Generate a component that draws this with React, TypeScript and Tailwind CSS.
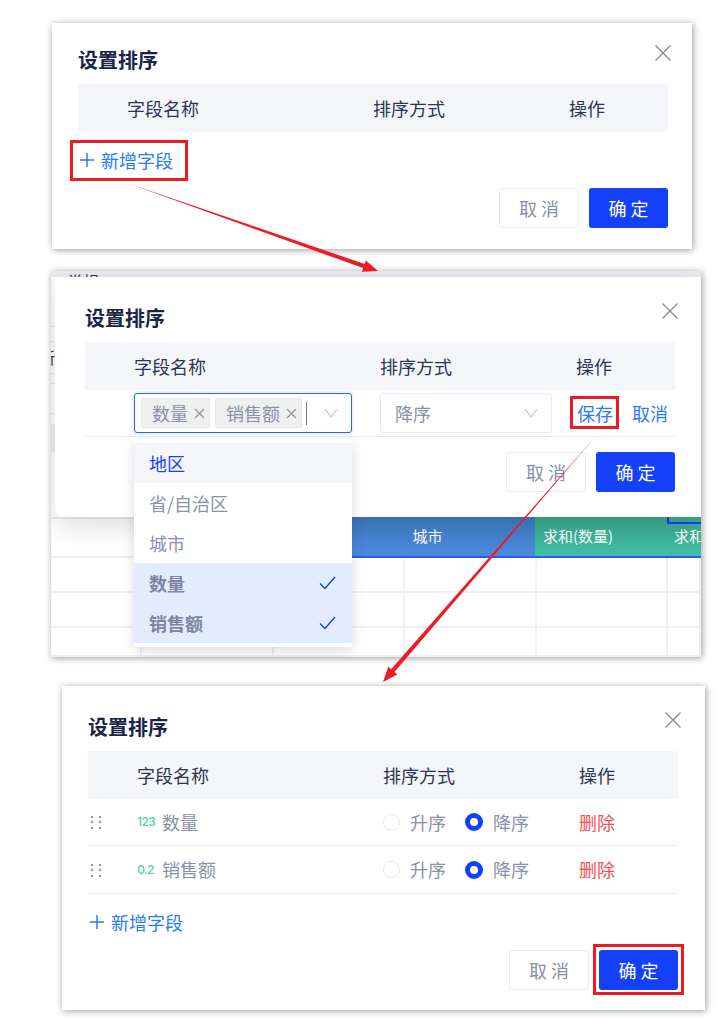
import type { ReactNode } from "react";

const headCols = "grid grid-cols-[49px_246px_196px_1fr]";
const bodyCells = Array.from({ length: 18 });

function CloseIcon() {
  return (
    <svg width="16" height="16" viewBox="0 0 16 16" fill="none" stroke="#8c8c8c" strokeWidth="1.4">
      <path d="M0.5 0.5L15.5 15.5M15.5 0.5L0.5 15.5" />
    </svg>
  );
}

function Chevron() {
  return (
    <svg width="14" height="10" viewBox="0 0 14 10" fill="none" stroke="#c4c7d0" strokeWidth="1.2">
      <path d="M1 1L7 9L13 1" />
    </svg>
  );
}

function Check() {
  return (
    <svg width="17" height="14" viewBox="0 0 17 14" fill="none" stroke="#1440fa" strokeWidth="1.4">
      <path d="M1 7.5L6 12.5L16 1" />
    </svg>
  );
}

function TagClose() {
  return (
    <svg width="11" height="11" viewBox="0 0 11 11" fill="none" stroke="#8a8f9c" strokeWidth="1.1">
      <path d="M1 1L10 10M10 1L1 10" />
    </svg>
  );
}

function DragDots() {
  return (
    <svg width="12" height="14" viewBox="0 0 12 14" fill="#8a91a8">
      <rect x="1" y="1" width="2" height="2" />
      <rect x="9" y="1" width="2" height="2" />
      <rect x="1" y="6" width="2" height="2" />
      <rect x="9" y="6" width="2" height="2" />
      <rect x="1" y="12" width="2" height="2" />
      <rect x="9" y="12" width="2" height="2" />
    </svg>
  );
}

function Title({ className }: { className: string }) {
  return <h2 className={`text-[20px] leading-[28px] font-bold text-[#1a2447] ${className}`}>设置排序</h2>;
}

function TableHead() {
  return (
    <div className={`${headCols} h-12 items-center bg-[#f4f6fa] text-[18px] text-[#2c3553]`}>
      <span />
      <span>字段名称</span>
      <span>排序方式</span>
      <span>操作</span>
    </div>
  );
}

function Footer() {
  return (
    <div className="flex justify-end gap-[10px]">
      <button className="h-10 w-20 rounded-[3px] border border-[#e8eaf0] bg-white text-[18px] text-[#8a91a8]">
        取 消
      </button>
      <OkButton />
    </div>
  );
}

function OkButton() {
  return (
    <button className="h-10 w-[79px] rounded-[3px] bg-[#1440fa] text-[18px] text-white">确 定</button>
  );
}

function AddField({ marked }: { marked?: boolean }) {
  return (
    <div className="relative flex items-center gap-[7px] pl-[2px] text-[18px] text-[#2a7cf6]">
      {marked && (
        <span className="absolute left-[-8px] top-[-7px] h-[41px] w-[118px] border-[3px] border-[#ed1c24]" />
      )}
      <svg width="14" height="14" viewBox="0 0 14 14" stroke="#2a7cf6" strokeWidth="1.5">
        <path d="M7 0V14M0 7H14" />
      </svg>
      <span>新增字段</span>
    </div>
  );
}

function Radio({ on, label }: { on?: boolean; label: string }) {
  return (
    <span className="flex items-center gap-[10px]">
      {on ? (
        <span className="h-[18px] w-[18px] rounded-full border-[5px] border-[#1440fa] bg-white" />
      ) : (
        <span className="h-[17px] w-[17px] rounded-full border border-[#e8eaf0] bg-white" />
      )}
      {label}
    </span>
  );
}

function SortRow({ icon, name, height }: { icon: string; name: string; height: string }) {
  return (
    <div className={`${headCols} ${height} items-center border-b border-[#e8eaf0] text-[18px] text-[#8a91a8]`}>
      <span className="pl-[2px]">
        <DragDots />
      </span>
      <span className="flex items-center">
        <span className="mr-[8px] w-[17px] whitespace-nowrap text-center font-['Inter',sans-serif] text-[12px] font-medium tracking-tighter text-[#55cdaa]">
          {icon}
        </span>
        {name}
      </span>
      <span className="flex items-center gap-[19px]">
        <Radio label="升序" />
        <Radio on label="降序" />
      </span>
      <span className="text-[#f0515a]">删除</span>
    </div>
  );
}

function Tag({ children }: { children: ReactNode }) {
  return (
    <span className="flex h-[30px] items-center gap-[6px] rounded-[2px] border border-[#e6e6e6] bg-[#f0f0f0] pl-[10px] pr-[4px] text-[18px] text-[#8a91a8]">
      {children}
      <TagClose />
    </span>
  );
}

function Option({ label, tone }: { label: string; tone?: "hover" | "picked" }) {
  if (tone === "picked") {
    return (
      <div className="flex h-10 items-center justify-between bg-[#e3ecfc] pl-[15px] pr-[16px] font-bold text-[#7e859f]">
        {label}
        <Check />
      </div>
    );
  }
  return (
    <div
      className={`flex h-10 items-center pl-[15px] ${tone === "hover" ? "bg-[#f4f6fa] text-[#1440fa]" : "text-[#8a91a8]"}`}
    >
      {label}
    </div>
  );
}

function FieldSelect() {
  return (
    <div className="relative w-[218px]">
      <div className="flex h-10 items-center gap-[5px] rounded-[3px] border border-[#2f62f5] pl-[6px] shadow-[0_0_0_2px_rgba(47,98,245,0.08)]">
        <Tag>数量</Tag>
        <Tag>销售额</Tag>
        <span className="ml-[-1px] h-[23px] w-px bg-[#6f7690]" />
        <span className="ml-[12px]">
          <Chevron />
        </span>
      </div>
      {/* dropdown hangs over the dialog edge and the sheet behind it */}
      <div className="absolute left-0 top-[46px] z-10 w-[218px] rounded-[3px] bg-white py-[4px] text-[18px] shadow-[0_4px_14px_rgba(0,0,0,0.14)]">
        <Option label="地区" tone="hover" />
        <Option label="省/自治区" />
        <Option label="城市" />
        <Option label="数量" tone="picked" />
        <Option label="销售额" tone="picked" />
      </div>
    </div>
  );
}

function EditRow() {
  return (
    <div className={`${headCols} h-[47px] border-b border-[#e8eaf0] pt-[3px] text-[18px]`}>
      <span />
      <FieldSelect />
      <div className="flex h-10 w-[172px] items-center justify-between rounded-[3px] border border-[#e8eaf0] pl-[14px] pr-[13px] text-[#8a91a8]">
        降序
        <Chevron />
      </div>
      <div className="relative flex h-10 items-center gap-[19px] pl-[1px] text-[#2a7cf6]">
        <span className="absolute left-[-6px] top-[3px] h-[33px] w-[49px] border-[3px] border-[#ed1c24]" />
        <span>保存</span>
        <span>取消</span>
      </div>
    </div>
  );
}

function Sheet() {
  return (
    <>
      <div className="h-[6px] overflow-hidden bg-[#eceef3] pl-[16px] text-[16px] leading-[20px] text-[#2c3553]">常规</div>
      <div className="flex h-[240px] w-[4px] flex-col overflow-hidden">
        <div className="h-[50px] shrink-0 border-b border-[#e8eaf0]" />
        <div className="h-[15px] shrink-0 border-b border-[#e8eaf0]" />
        <div className="flex h-[32px] shrink-0 justify-end border-b border-[#e8eaf0] text-[16px] leading-[30px] text-[#2c3553]">
          <span className="shrink-0">新</span>
        </div>
        <div className="h-[10px] shrink-0 border-b border-[#e8eaf0]" />
        <div className="h-[30px] shrink-0 border-b border-[#e8eaf0]" />
        <div className="h-[10px] shrink-0" />
        <div className="h-[28px] shrink-0 bg-[#eceef3]" />
      </div>
      <div className="flex h-[41px] text-[15px] text-white">
        <div className="w-[269px] border-b-2 border-t-2 border-[#eceef5] bg-white" />
        <div className="flex w-[215px] items-center justify-center border-b-2 border-[#2a5cf0] bg-gradient-to-b from-[#3f7cc6] to-[#4a8bdc]">
          城市
        </div>
        <div className="flex w-[132px] items-center border-b-2 border-[#2a5cf0] bg-gradient-to-b from-[#3aa98f] to-[#41bfa5] pl-[8px]">
          求和(数量)
        </div>
        <div className="relative flex flex-1 items-center overflow-hidden whitespace-nowrap border-b-2 border-[#2a5cf0] bg-gradient-to-b from-[#3aa98f] to-[#41bfa5] pl-[7px]">
          求和(销售额)
          <span className="absolute left-0 top-0 h-[7px] w-full border-2 border-t-0 border-r-0 border-[#1440fa]" />
        </div>
      </div>
      <div className="grid grid-cols-[91px_132px_131px_132px_131px_33px] grid-rows-[35px_35px_29px]">
        {bodyCells.map((_, i) => (
          <div key={i} className="border-b-2 border-r-2 border-[#eef0f6] bg-white" />
        ))}
      </div>
    </>
  );
}

// tapered line with a head: thin at the tail, widest right behind the tip
function arrowPoints(x1: number, y1: number, x2: number, y2: number) {
  const len = Math.hypot(x2 - x1, y2 - y1);
  const dx = (x2 - x1) / len;
  const dy = (y2 - y1) / len;
  const nx = -dy;
  const ny = dx;
  const bx = x2 - dx * 15;
  const by = y2 - dy * 15;
  const pts = [
    [x1, y1],
    [bx + nx * 2.2, by + ny * 2.2],
    [bx + nx * 6, by + ny * 6],
    [x2, y2],
    [bx - nx * 6, by - ny * 6],
    [bx - nx * 2.2, by - ny * 2.2],
  ];
  return pts.map((p) => p.join(",")).join(" ");
}

export default function App() {
  return (
    <div className="relative h-[1024px] w-[719px] overflow-hidden bg-white pt-[23px] font-['Noto_Sans_CJK_SC','Noto_Sans',sans-serif]">
      {/* step 1: empty dialog */}
      <section className="relative ml-[52px] h-[226px] w-[640px] bg-white pl-[26px] pr-[24px] pt-[23px] shadow-[1px_1px_7px_rgba(0,0,0,0.4)]">
        <span className="absolute right-[21px] top-[22px]">
          <CloseIcon />
        </span>
        <Title className="mb-[10px]" />
        <TableHead />
        <div className="flex h-14 items-center">
          <AddField marked />
        </div>
        <Footer />
      </section>

      {/* step 2: editing a row, table behind the dialog */}
      <section className="relative ml-[51px] mt-[22px] h-[386px] w-[650px] overflow-hidden bg-white shadow-[1px_1px_7px_rgba(0,0,0,0.4)]">
        <Sheet />
        <div className="absolute left-[4px] top-[6px] h-[240px] w-[646px] rounded-bl-lg bg-white pl-[30px] pr-[26px] pt-[27px] shadow-[0_6px_30px_rgba(0,0,0,0.16)]">
          <span className="absolute right-[23px] top-[26px]">
            <CloseIcon />
          </span>
          <Title className="mb-[10px]" />
          <TableHead />
          <EditRow />
          <div className="mt-[15px]">
            <Footer />
          </div>
        </div>
      </section>

      {/* step 3: fields added */}
      <section className="relative ml-[62px] mt-[29px] h-[324px] w-[643px] bg-white pl-[26px] pr-[27px] pt-[27px] shadow-[1px_1px_7px_rgba(0,0,0,0.4)]">
        <span className="absolute right-[24px] top-[26px]">
          <CloseIcon />
        </span>
        <Title className="mb-[10px]" />
        <TableHead />
        <SortRow icon="123" name="数量" height="h-[47px]" />
        <SortRow icon="0.2" name="销售额" height="h-[48px]" />
        <div className="flex h-14 items-center">
          <AddField />
        </div>
        <div className="flex justify-end gap-[10px]">
          <button className="h-10 w-20 rounded-[3px] border border-[#e8eaf0] bg-white text-[18px] text-[#8a91a8]">
            取 消
          </button>
          <div className="relative">
            <span className="absolute left-[-6px] top-[-6px] h-[51px] w-[91px] border-[3px] border-[#ed1c24]" />
            <OkButton />
          </div>
        </div>
      </section>

      {/* annotation arrows drawn over the panels */}
      <svg className="pointer-events-none absolute left-0 top-0" width="719" height="1024" fill="#ed1c24">
        <polygon points={arrowPoints(127, 183, 378, 271)} />
        <polygon points={arrowPoints(595, 437, 383, 682)} />
      </svg>
    </div>
  );
}
